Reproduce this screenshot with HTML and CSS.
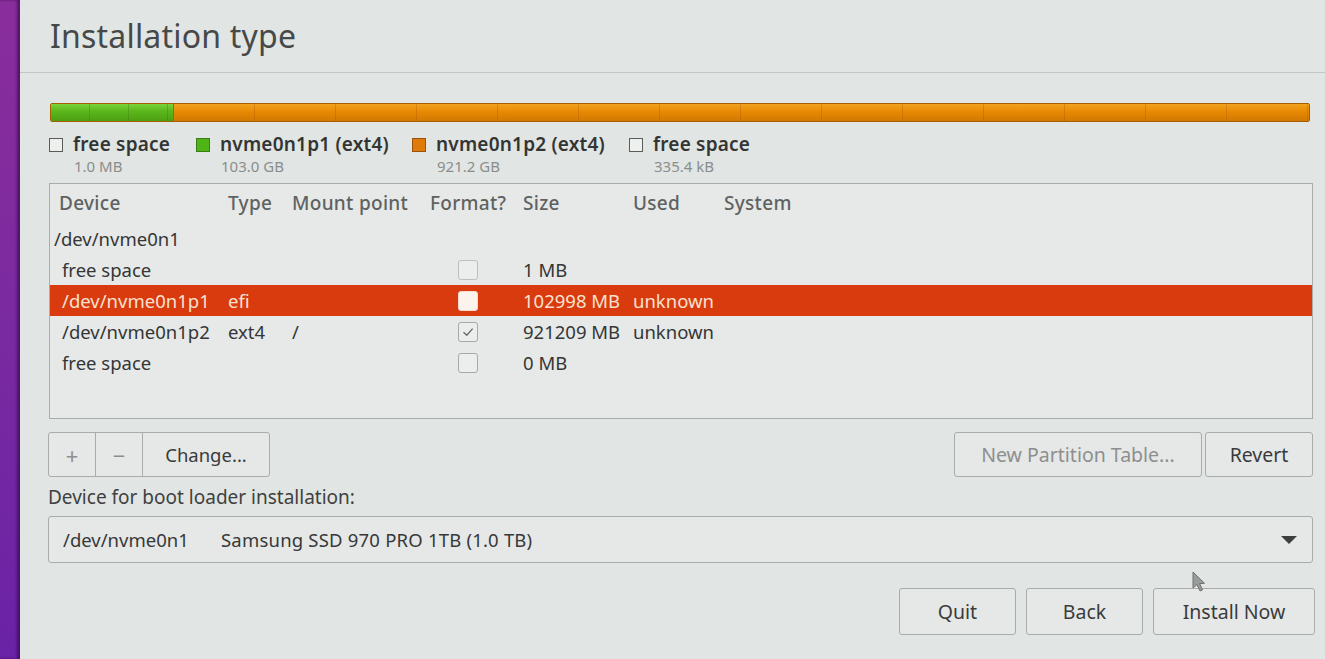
FILE: index.html
```html
<!DOCTYPE html>
<html>
<head>
<meta charset="utf-8">
<title>Installation type</title>
<link rel="stylesheet" href="styles.css">
</head>
<body>
<div class="screen">
  <div class="desktop-edge"></div>
  <div class="window">
    <h1 class="title">Installation type</h1>
    <div class="sep"></div>

    <div class="bar">
      <div class="seg seg-green" style="width:123px"></div>
      <div class="seg seg-orange"></div>
    </div>

    <div class="legend">
      <div class="legend-item li-1">
        <span class="swatch swatch-empty"></span>
        <div class="legend-text"><div class="legend-name">free space</div><div class="legend-size">1.0 MB</div></div>
      </div>
      <div class="legend-item li-2">
        <span class="swatch swatch-green"></span>
        <div class="legend-text"><div class="legend-name">nvme0n1p1 (ext4)</div><div class="legend-size">103.0 GB</div></div>
      </div>
      <div class="legend-item li-3">
        <span class="swatch swatch-orange"></span>
        <div class="legend-text"><div class="legend-name">nvme0n1p2 (ext4)</div><div class="legend-size">921.2 GB</div></div>
      </div>
      <div class="legend-item">
        <span class="swatch swatch-empty"></span>
        <div class="legend-text"><div class="legend-name">free space</div><div class="legend-size">335.4 kB</div></div>
      </div>
    </div>

    <div class="table">
      <div class="row head">
        <div class="c c-dev">Device</div>
        <div class="c">Type</div>
        <div class="c">Mount point</div>
        <div class="c">Format?</div>
        <div class="c">Size</div>
        <div class="c">Used</div>
        <div class="c">System</div>
      </div>
      <div class="row">
        <div class="c c-disk">/dev/nvme0n1</div>
        <div class="c"></div><div class="c"></div><div class="c"></div><div class="c"></div><div class="c"></div><div class="c"></div>
      </div>
      <div class="row">
        <div class="c c-part">free space</div>
        <div class="c"></div><div class="c"></div>
        <div class="c c-fmt"><span class="check check-dim"></span></div>
        <div class="c">1 MB</div>
        <div class="c"></div><div class="c"></div>
      </div>
      <div class="row selected">
        <div class="c c-part">/dev/nvme0n1p1</div>
        <div class="c">efi</div>
        <div class="c"></div>
        <div class="c c-fmt"><span class="check check-sel"></span></div>
        <div class="c">102998 MB</div>
        <div class="c">unknown</div>
        <div class="c"></div>
      </div>
      <div class="row">
        <div class="c c-part">/dev/nvme0n1p2</div>
        <div class="c">ext4</div>
        <div class="c">/</div>
        <div class="c c-fmt"><span class="check"><svg viewBox="0 0 18 18" width="18" height="18"><path d="M4.5 9.2 L7.8 12.3 L13.6 5.6" fill="none" stroke="#6a6c6b" stroke-width="1.4"/></svg></span></div>
        <div class="c">921209 MB</div>
        <div class="c">unknown</div>
        <div class="c"></div>
      </div>
      <div class="row">
        <div class="c c-part">free space</div>
        <div class="c"></div><div class="c"></div>
        <div class="c c-fmt"><span class="check"></span></div>
        <div class="c">0 MB</div>
        <div class="c"></div><div class="c"></div>
      </div>
    </div>

    <div class="actions">
      <div class="btn-group">
        <div class="btn btn-icon btn-dim">+</div>
        <div class="btn btn-icon btn-dim">−</div>
        <div class="btn btn-change">Change...</div>
      </div>
      <div class="actions-right">
        <div class="btn btn-newtable btn-dim">New Partition Table...</div>
        <div class="btn btn-revert">Revert</div>
      </div>
    </div>

    <div class="boot-label">Device for boot loader installation:</div>
    <div class="combo">
      <span class="combo-dev">/dev/nvme0n1</span>
      <span class="combo-name">Samsung SSD 970 PRO 1TB (1.0 TB)</span>
      <svg class="combo-arrow" viewBox="0 0 16 8" width="16" height="8"><path d="M0 0 L16 0 L8 8 Z" fill="#3d3f3e"/></svg>
    </div>

    <div class="footer">
      <div class="btn btn-foot">Quit</div>
      <div class="btn btn-foot">Back</div>
      <div class="btn btn-foot btn-install">Install Now</div>
    </div>
  </div>
</div>
<svg class="cursor" viewBox="0 0 14 22" width="14" height="22"><path d="M1 1 L1 17 L5 13.5 L8 20 L10.5 19 L7.6 12.6 L12.5 12.3 Z" fill="#9a9c9b" stroke="#6e706f" stroke-width="1"/></svg>
</body>
</html>
```
FILE: styles.css
```css
* { box-sizing: border-box; }
html, body { margin: 0; padding: 0; }
body {
  width: 1325px;
  height: 659px;
  overflow: hidden;
  font-family: "Noto Sans", "Open Sans", sans-serif;
  color: #3a3b3b;
  background: #e1e5e3;
  position: relative;
}
.screen {
  display: flex;
  height: 659px;
}
.desktop-edge {
  width: 20px;
  flex: none;
  background: linear-gradient(180deg, #8a2d9c 0%, #7a2aa0 50%, #6a22a6 100%);
  box-shadow: inset -3px 0 3px rgba(40, 0, 60, 0.55);
}
.window {
  flex: 1;
  background: #e1e5e3;
  padding: 15px 12px 0 28px;
  display: flex;
  flex-direction: column;
}
.title {
  margin: 0 0 0 2px;
  font-size: 32px;
  line-height: 42px;
  font-weight: 400;
  color: #474949;
  letter-spacing: 0.2px;
}
.sep {
  height: 1px;
  background: #c3c6c4;
  margin: 15px -12px 0 -28px;
}
.bar {
  margin: 30px 3px 0 2px;
  height: 19px;
  display: flex;
  border: 1px solid #a65f00;
  border-radius: 2px;
  overflow: hidden;
}
.seg { height: 100%; }
.seg-green {
  background: repeating-linear-gradient(90deg, transparent 0 38px, rgba(60,120,10,0.35) 38px 39px), linear-gradient(180deg, #7ad33a 0%, #5cb81c 40%, #4d9f12 100%);
  border-right: 1px solid #4d8f10;
}
.seg-orange {
  flex: 1;
  background: repeating-linear-gradient(90deg, transparent 0 80px, rgba(160,80,0,0.3) 80px 81px), linear-gradient(180deg, #f4a21e 0%, #e78a04 45%, #d07800 100%);
}
.legend {
  display: flex;
  margin-top: 11px;
  height: 44px;
}
.legend-item {
  display: flex;
  align-items: flex-start;
  gap: 10px;
  margin-left: 1px;
}
.li-1 { width: 146px; }
.li-2 { width: 215px; }
.li-3 { width: 216px; }
.swatch {
  width: 14px;
  height: 14px;
  margin-top: 5px;
  flex: none;
  border: 1px solid #5a5c5b;
}
.swatch-empty { background: #eef0ee; }
.swatch-green { background: #4fb516; border-color: #3b7c14; }
.swatch-orange { background: #e07a08; border-color: #9a5208; }
.legend-name {
  font-size: 19px;
  line-height: 23px;
  font-weight: 600;
  color: #333534;
  letter-spacing: 0.2px;
}
.legend-size {
  font-size: 15px;
  line-height: 20px;
  color: #8b8d8c;
  padding-left: 1px;
}
.table {
  margin: 6px 0 0 1px;
  height: 236px;
  border: 1px solid #a9acab;
  background: #e6e9e8;
  font-size: 18.5px;
}
.row {
  display: grid;
  grid-template-columns: 176px 64px 138px 93px 110px 91px 1fr;
  height: 31px;
  align-items: center;
  color: #353636;
}
.row.head {
  height: 39px;
  color: #5f6261;
  font-size: 19px;
  font-weight: 500;
  letter-spacing: 0.3px;
  padding-bottom: 2px;
}
.c {
  padding-left: 2px;
  white-space: nowrap;
  line-height: 24px;
}
.c-dev { padding-left: 9px; }
.c-disk { padding-left: 4px; }
.c-part { padding-left: 12px; }
.c-fmt { padding-left: 30px; display: flex; align-items: center; }
.row.selected {
  background: #d93a0e;
  color: #f7e2cf;
}
.check {
  width: 20px;
  height: 20px;
  border: 1px solid #a6a9a8;
  border-radius: 3px;
  background: #eceeed;
  display: flex;
  align-items: center;
  justify-content: center;
}
.check-dim { border-color: #bcbfbe; }
.check-sel { background: #fbf3ec; border-color: #f3dccd; }
.actions {
  margin-top: 13px;
  display: flex;
  justify-content: space-between;
  height: 45px;
}
.btn-group { display: flex; }
.btn {
  height: 45px;
  border: 1px solid #a9acab;
  border-radius: 3px;
  background: #e5e8e7;
  display: flex;
  align-items: center;
  justify-content: center;
  font-size: 18.5px;
  color: #3a3b3b;
}
.btn-group .btn { border-radius: 0; margin-left: -1px; }
.btn-group .btn:first-child { border-radius: 3px 0 0 3px; margin-left: 0; }
.btn-group .btn:last-child { border-radius: 0 3px 3px 0; }
.btn-icon { width: 48px; font-size: 22px; }
.btn-dim { color: #8d8f8e; }
.btn-change { width: 128px; }
.actions-right { display: flex; gap: 3px; }
.btn-newtable { width: 248px; font-size: 19.5px; }
.btn-revert { width: 108px; font-size: 19.5px; }
.boot-label {
  margin-top: 9px;
  font-size: 19px;
  line-height: 22px;
  color: #3f4140;
}
.combo {
  margin-top: 8px;
  height: 47px;
  border: 1px solid #a9acab;
  border-radius: 3px;
  background: #e5e8e7;
  display: flex;
  align-items: center;
  padding: 0 15px 0 14px;
  font-size: 18.5px;
  color: #373838;
}
.combo-dev { width: 158px; }
.combo-name { flex: 1; letter-spacing: 0.2px; }
.combo-arrow { flex: none; }
.footer {
  margin-top: 25px;
  display: flex;
  justify-content: flex-end;
  gap: 10px;
  margin-right: -2px;
}
.btn-foot { width: 117px; height: 47px; font-size: 19.5px; }
.btn-install { width: 162px; }
.cursor {
  position: absolute;
  left: 1192px;
  top: 571px;
}
```
